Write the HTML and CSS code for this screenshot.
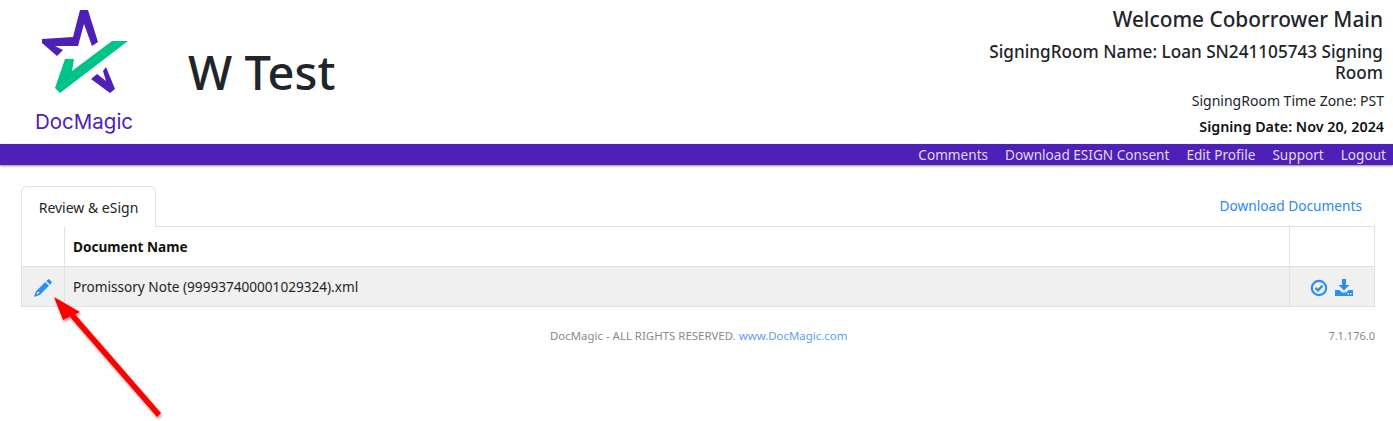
FILE: index.html
```html
<!DOCTYPE html>
<html lang="en">
<head>
<meta charset="utf-8">
<title>DocMagic</title>
<link rel="stylesheet" href="styles.css">
</head>
<body>
<header class="top">
  <div class="brand">
    <svg class="logo-mark" viewBox="0 0 100 90" width="100" height="90" aria-hidden="true">
      <path class="purple" d="M7 29 38 27 45 0 53 0 63 32 57 36 49 14 43 36 20 36 28 40 22 46 7 33Z"/>
      <path class="purple" d="M71 57 80 79 75 83 56 69 62 64 71 71 68 61Z"/>
      <path class="green" d="M93 31 77 31 37 61 39 49 30 49 20 78 25 83Z"/>
    </svg>
    <span class="logo-text">DocMagic</span>
  </div>
  <h1 class="title">W Test</h1>
  <div class="info">
    <h2 class="welcome">Welcome Coborrower Main</h2>
    <h3 class="room">SigningRoom Name: Loan SN241105743 Signing Room</h3>
    <p class="zone">SigningRoom Time Zone: PST</p>
    <p class="date">Signing Date: Nov 20, 2024</p>
  </div>
</header>
<nav class="band">
  <a href="#">Comments</a>
  <a href="#">Download ESIGN Consent</a>
  <a href="#">Edit Profile</a>
  <a href="#">Support</a>
  <a href="#">Logout</a>
</nav>
<main class="content">
  <div class="tabs">
    <div class="tab">Review &amp; eSign</div>
    <a class="download-all" href="#">Download Documents</a>
  </div>
  <div class="table">
    <div class="cell head"></div>
    <div class="cell head name">Document Name</div>
    <div class="cell head end"></div>
    <div class="cell body icon-cell">
      <svg class="pencil" viewBox="0 0 18 18" width="18" height="18" aria-hidden="true">
        <path d="M12.2 1.9 14 .6c.7-.5 1.300-.4 1.800.1l1.500 1.500c.5.500.6 1.200.1 1.800l-1.300 1.800Z"/>
        <path d="M11.200 2.900 15 6.700 5.800 15.900 1 17.800c-.5.200-1-.3-.8-.8L2 12.200ZM3.400 12.800 2.600 15.400 3.600 15.300 4 14.300 5.100 14 5.200 13Z" fill-rule="evenodd"/>
      </svg>
    </div>
    <div class="cell body name">Promissory Note (999937400001029324).xml</div>
    <div class="cell body end actions">
      <svg class="action" viewBox="0 0 18 18" width="18" height="18" aria-hidden="true">
        <circle class="ring" cx="9" cy="9" r="7.200"/>
        <path class="tick" d="M5.500 8.800 8 11.300 12.600 6.700"/>
      </svg>
      <svg class="action" viewBox="0 0 18 18" width="18" height="18" aria-hidden="true">
        <path d="M7 0h4v6h3.500L9 11.500 3.500 6H7Z"/>
        <path d="M0 11h4.500L7 13.500h4L13.500 11H18v6H0Z"/>
        <rect class="dot" x="12.500" y="14" width="1.500" height="1.500"/>
        <rect class="dot" x="15" y="14" width="1.500" height="1.500"/>
      </svg>
    </div>
  </div>
  <footer class="foot">
    <span class="foot-left"></span>
    <span class="foot-mid">DocMagic - ALL RIGHTS RESERVED. <a href="#">www.DocMagic.com</a></span>
    <span class="foot-right">7.1.176.0</span>
  </footer>
</main>
<svg class="arrow" viewBox="0 0 200 140" width="200" height="140" aria-hidden="true">
  <defs>
    <filter id="soft" x="-20%" y="-20%" width="140%" height="140%">
      <feDropShadow dx="1" dy="2" stdDeviation="1.500" flood-color="#000" flood-opacity=".4"/>
    </filter>
  </defs>
  <g filter="url(#soft)" fill="#fd0000">
    <path d="M157 132 70 32 74 28 161 128Z"/>
    <path d="M54 12 80 27 63 35Z"/>
  </g>
</svg>
</body>
</html>
```
FILE: styles.css
```css
* { box-sizing: border-box; }
html, body { height: 100%; }
body {
  margin: 0;
  position: relative;
  overflow: hidden;
  background: #fff;
  color: #212529;
  font-family: "Noto Sans", "Open Sans", sans-serif;
  font-size: 14px;
}
a { color: #2e86f5; text-decoration: none; }

.top {
  height: 144px;
  display: flex;
  align-items: flex-start;
  justify-content: space-between;
  padding-right: 10px;
}
.brand {
  width: 170px;
  flex: none;
  display: flex;
  flex-direction: column;
  padding: 10px 0 0 35px;
}
.logo-mark { display: block; }
.logo-mark .purple { fill: #4f20b7; }
.logo-mark .green { fill: #00c389; }
.logo-text {
  margin-top: 9px;
  width: 100px;
  color: #4f20b7;
  font-family: "Inter", sans-serif;
  font-size: 20.500px;
  line-height: 26px;
}
.title {
  flex: none;
  margin: 44px auto 0 18px;
  font-size: 47px;
  line-height: 56px;
  font-weight: 500;
}
.info {
  flex: none;
  width: 430px;
  text-align: right;
}
.welcome {
  margin: 5px 0 0;
  font-size: 20.800px;
  line-height: 28px;
  font-weight: 500;
}
.room {
  margin: 8px 0 0;
  font-size: 17.150px;
  line-height: 21px;
  font-weight: 500;
}
.zone {
  margin: 9px -1px 0 0;
  font-size: 14px;
  line-height: 18px;
}
.date {
  margin: 8px -1px 0 0;
  font-size: 14.300px;
  line-height: 18px;
  font-weight: 600;
  color: #111;
}

.band {
  height: 21px;
  display: flex;
  justify-content: flex-end;
  align-items: center;
  gap: 17px;
  padding-right: 7px;
  background: #4f20b7;
  box-shadow: 0 1px 2px rgba(0, 0, 0, .45);
}
.band a { color: #e0d8f5; font-size: 13.600px; line-height: 21px; }

.content { padding: 21px 18px 0 21px; }
.tabs {
  height: 40px;
  display: flex;
  justify-content: space-between;
}
.tab {
  width: 135px;
  height: 41px;
  padding-top: 11px;
  text-align: center;
  font-size: 14px;
  line-height: 20px;
  background: #fff;
  border: 1px solid #dee2e6;
  border-bottom: 0;
  border-radius: 6px 6px 0 0;
  position: relative;
  z-index: 1;
}
.download-all { padding: 10px 13px 0 0; font-size: 13.700px; line-height: 20px; }

.table {
  display: grid;
  grid-template-columns: 42px 1fr 85px;
  grid-template-rows: 40px 39px;
  border: 1px solid #dee2e6;
}
.cell {
  display: flex;
  align-items: center;
  padding-left: 8px;
  border-left: 1px solid #dee2e6;
}
.cell:nth-child(3n+1) { border-left: 0; padding-left: 0; justify-content: center; }
.head { color: #111; font-weight: 700; font-size: 13.600px; border-bottom: 1px solid #dee2e6; }
.body { background: #f0f0f0; font-size: 13.600px; }
.icon-cell { padding-top: 2px; }
.actions { gap: 7px; padding: 2px 0 0 20px; }
.pencil path, .action path { fill: #2e8ff0; }
.action .ring { fill: none; stroke: #2e8ff0; stroke-width: 2.200; }
.action .tick { fill: none; stroke: #2e8ff0; stroke-width: 2.400; }
.action .dot { fill: #f0f0f0; }

.foot {
  display: flex;
  justify-content: space-between;
  padding-top: 20px;
  font-size: 11.450px;
  line-height: 18px;
  color: #8a8a8a;
}
.foot-left { width: 48px; }
.foot-right { font-size: 11px; }
.foot a { color: #5d9df5; }

.arrow {
  position: absolute;
  left: 0;
  top: 285px;
  pointer-events: none;
}
```
